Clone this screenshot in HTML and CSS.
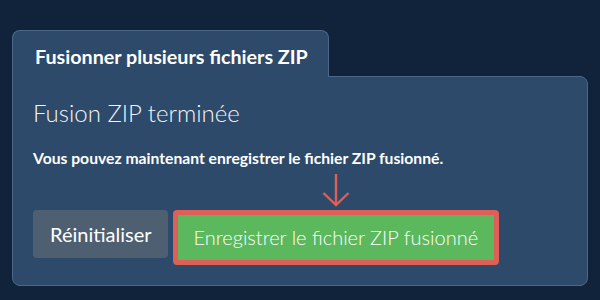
FILE: index.html
```html
<!DOCTYPE html>
<html>
<head>
	<link rel="stylesheet" href="styles.css">
</head>
<body>
    <div class="merger">
        <div class="tab">Fusionner plusieurs fichiers ZIP</div>
        <div class="panel">
            <h2 class="title">Fusion ZIP terminée</h2>
            <p class="message">Vous pouvez maintenant enregistrer le fichier ZIP fusionné.</p>
            <div class="actions">
                <a href="#" class="button reset">Réinitialiser</a>
                <div class="save_wrap">
                    <svg class="pointer" width="28" height="34" viewBox="0 0 28 34">
                        <path d="M14 1 L14 32 M1.5 20 L14 32 L26.5 20" fill="none" stroke="#dd5f58" stroke-width="2.4"/>
                    </svg>
                    <a href="#" class="button save">Enregistrer le fichier ZIP fusionné</a>
                </div>
            </div>
        </div>
    </div>
</body>
</html>
```

FILE: styles.css
```css
		html, body {
			margin: 0;
			padding: 0;
			background-color: #11233a;
		}
		a { text-decoration: none; }
		.merger {
			padding: 30px 12px 0 12px;
			font-family: Lato, "Noto Sans", sans-serif;
			color: #fff;
		}
		.tab {
			display: inline-block;
			position: relative;
			z-index: 1;
			margin-bottom: -1px;
			padding: 14px 20px 8px 22px;
			height: 24px;
			line-height: 24px;
			font-size: 19.7px;
			font-weight: bold;
			background-color: #2d4a6a;
			border: 1px solid #4c6788;
			border-bottom: none;
			border-radius: 8px 8px 0 0;
		}
		.panel {
			background-color: #2d4a6a;
			border: 1px solid #4c6788;
			border-radius: 0 8px 8px 8px;
			padding: 0 20px 20px 20px;
		}
		.title {
			margin: 21px 0 0 0;
			font-size: 24px;
			font-weight: 300;
			line-height: 30px;
			color: #f2f5f9;
		}
		.message {
			margin: 20px 0 0 0;
			font-size: 15.7px;
			font-weight: bold;
			line-height: 20px;
		}
		.actions {
			display: flex;
			align-items: flex-start;
			gap: 5px;
			margin-top: 42px;
		}
		.button {
			display: inline-block;
			color: #fff;
			font-size: 20px;
			line-height: 24px;
			border-radius: 4px;
		}
		.reset {
			background-color: #4e5f71;
			padding: 12px 17px;
		}
		.save_wrap {
			position: relative;
		}
		.pointer {
			position: absolute;
			left: 50%;
			bottom: 100%;
			margin-left: -14px;
			margin-bottom: 3px;
		}
		.save {
			background-color: #5cb85c;
			border: 5px solid #dd5f58;
			padding: 10px 16px 11px 15px;
			font-weight: 300;
		}
```
